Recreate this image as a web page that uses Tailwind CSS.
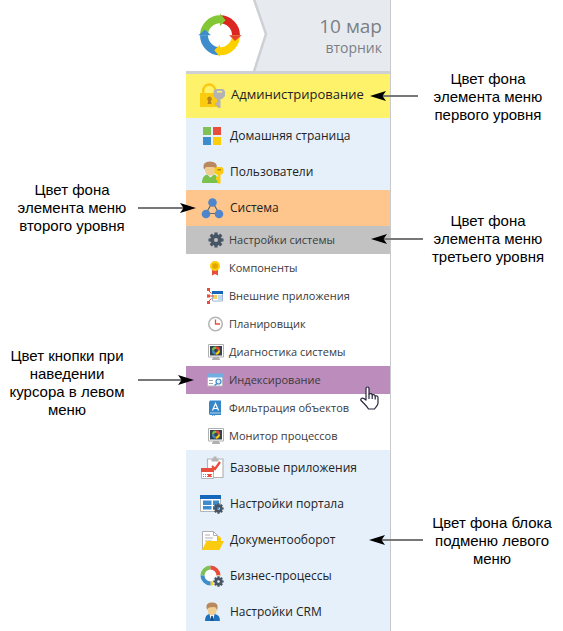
<!DOCTYPE html>
<html lang="ru">
<head>
<meta charset="utf-8">
<meta name="viewport" content="width=device-width, initial-scale=1">
<title>Цвета левого меню</title>
<script src="https://cdn.jsdelivr.net/npm/@tailwindcss/browser@4"></script>
</head>
<body class="bg-white font-['Liberation_Sans',Arial,sans-serif] text-black">
<!-- Shared drawings -->
<svg class="hidden" aria-hidden="true">
  <symbol id="gear" viewBox="0 0 16 16">
    <g stroke="#475564" stroke-width="3.200" fill="none">
      <path d="M8 .5V4M8 12v3.500M.5 8H4M12 8h3.500M2.700 2.700l2.500 2.500M10.800 10.800l2.500 2.500M13.300 2.700l-2.500 2.500M5.200 10.800l-2.500 2.500"/>
      <circle cx="8" cy="8" r="3.900" stroke-width="3.800"/>
    </g>
  </symbol>
  <symbol id="monitor" viewBox="0 0 16 16">
    <path fill="#fff" stroke="#b0b0b0" d="M.5.5h15v12.500H.5z"/>
    <path fill="#34434f" d="M2 2h12v9.500H2z"/>
    <path fill="#b0b0b0" d="M5 13h6v1.500h1V16H4v-1.500h1z"/>
    <g fill="none" stroke-width="2.200"><path stroke="#78bd4c" d="M5 6.600A3 3 0 0 1 8 3.600"/><path stroke="#e84c3d" d="M8 3.600a3 3 0 0 1 3 3"/><path stroke="#fbce07" d="M11 6.600a3 3 0 0 1-3 3"/><path stroke="#3e8ccb" d="M8 9.600a3 3 0 0 1-3-3"/></g>
  </symbol>
  <symbol id="arrow" viewBox="0 0 16 12">
    <path fill="#000" d="M0 6 16 1 12.500 6 16 11z"/>
  </symbol>
</svg>

<main class="grid grid-cols-[186px_205px_1fr]">
  <!-- Notes to the left of the menu -->
  <section class="relative z-10 pt-[181px] text-[15px] leading-[18px] text-center">
    <div class="relative">
      <p class="w-36">Цвет фона<br>элемента меню<br>второго уровня</p>
      <svg class="absolute left-[138px] top-[21px] h-3 w-[58px]" viewBox="0 0 58 12" aria-hidden="true"><path stroke="#777" stroke-width="2" d="M0 6h46"/><use href="#arrow" width="16" height="12" transform="matrix(-1 0 0 1 58 0)"/></svg>
    </div>
    <div class="relative pt-28">
      <p class="w-[134px]">Цвет кнопки при<br>наведении<br>курсора в левом<br>меню</p>
      <svg class="absolute left-[138px] top-[139px] h-3 w-[56px]" viewBox="0 0 56 12" aria-hidden="true"><path stroke="#777" stroke-width="2" d="M0 6h44"/><use href="#arrow" width="16" height="12" transform="matrix(-1 0 0 1 56 0)"/></svg>
    </div>
  </section>

  <!-- Menu -->
  <aside class="border-r border-[#c8cacd] bg-[#e5f0fb] pb-px font-['Open_Sans','Noto_Sans',sans-serif] text-[#222]">
    <header class="flex h-[74px] border-b-[3px] border-[#cdd0d5] bg-[#e7ebf0]">
      <svg class="h-[71px] w-[84px] shrink-0" viewBox="0 0 84 71" role="img" aria-label="Логотип">
        <path fill="#fff" d="M0 0h68l12.500 34L68 71H0z"/>
        <path fill="none" stroke="#cdd0d5" stroke-width="2.500" d="M67.500-2 80 34 67.500 73"/>
        <g transform="translate(12 13.300)">
          <g fill="none" stroke-width="8">
            <path stroke="#83c736" d="M6 22A16 16 0 0 1 22 6"/>
            <path stroke="#dc2420" d="M22 6A16 16 0 0 1 38 22"/>
            <path stroke="#fdd000" d="M38 22A16 16 0 0 1 22 38"/>
            <path stroke="#3e8ccb" d="M22 38A16 16 0 0 1 6 22"/>
          </g>
          <path fill="#83c736" d="M22 .3l5.700 6.700L22 12.800z"/>
          <path fill="#e5432f" d="M43.700 22l-6.700 5.700L31.200 22z"/>
          <path fill="#fdd000" d="M22 43.700l-5.700-6.700L22 31.200z"/>
          <path fill="#3e8ccb" d="M.3 22l6.700-5.700L12.800 22z"/>
        </g>
      </svg>
      <p class="grow pt-[14px] pr-2 text-right text-[19px] leading-6 text-[#7b7f84]">10 мар<span class="block text-[14px] leading-5">вторник</span></p>
    </header>
    <nav aria-label="Левое меню">
      <a href="#admin" class="flex h-11 items-center gap-1 bg-[#fff26b] pb-[2px] pl-[13px] text-[13px]">
        <svg class="h-7 w-7" viewBox="0 0 28 28" aria-hidden="true">
          <path fill="none" stroke="#fbc80e" stroke-width="2.400" d="M4.200 13V9.500a6 6 0 0 1 12 0V13"/>
          <path fill="#fbcb10" d="M1 12h18v14H1z"/><path fill="#b4831d" d="M10.500 15.500a2.500 2.500 0 0 0-1.300 4.500L8.500 23h4l-.7-3a2.500 2.500 0 0 0-1.300-4.500z"/>
          <path fill="#b3b3b3" d="M16 8h8l2 2v5l-3 3h-1.500v9H20l-2-1v-1.500h-2v-3h2V18h-1l-2.500-3v-5z"/><path fill="#fff26b" d="M18 10h5v1.500h-5z"/>
        </svg>Администрирование</a>
      <ul class="text-xs">
        <li><a href="#home" class="flex h-9 items-center gap-[6px] pl-[14px]">
          <svg class="size-6" viewBox="0 0 24 24" aria-hidden="true"><path fill="#7fc154" d="M3 3h8v8H3z"/><path fill="#e84c3d" d="M13 3h8v8h-8z"/><path fill="#3e8ccb" d="M3 13h8v8H3z"/><path fill="#fbce07" d="M13 13h8v8h-8z"/></svg>Домашняя страница</a></li>
        <li><a href="#users" class="flex h-9 items-center gap-[6px] pl-[14px]">
          <svg class="size-6" viewBox="0 0 24 24" aria-hidden="true">
            <path fill="#efce91" d="M5 5.500h11v5q-1 5-5.500 5T5 10.500z"/><path fill="#b9885e" d="M3.500 8Q2.500 1.500 10 1.500t7 6.500l-1 2q-.5-3-3-3H7q-2.500 0-2.500 3z"/>
            <path fill="#7bc14d" d="M7 14.500l3.500 3 3.500-3q4 .5 4 8.500H2q0-7.500 5-8.500z"/>
            <path fill="#fbcb10" d="M16 7h6l1.500 1.500v4L22 14.500h-1.500v9h-3V20h-1.500v-3h1.500v-2.500H16l-1.500-2v-4z"/><path fill="#b4831d" d="M17.500 9h3.500v1.500h-3.500z"/>
          </svg>Пользователи</a></li>
        <li>
          <a href="#system" class="flex h-9 items-center gap-[6px] bg-[#fec68d] pl-[14px]">
          <svg class="size-6" viewBox="0 0 24 24" aria-hidden="true"><path fill="none" stroke="#666" stroke-width="1.200" d="M12.500 6 6 17.500h13z"/><g fill="#4f86cb"><circle cx="12.500" cy="6.500" r="4.300"/><circle cx="6" cy="18" r="4.300"/><circle cx="19" cy="18" r="4.300"/></g></svg>Система</a>
          <ul class="bg-white text-[11px] text-[#3a3a3a]">
            <li><a href="#settings" class="flex h-7 items-center gap-1 bg-[#c2c2c2] pl-[21px]"><svg class="h-4 w-[18px]" aria-hidden="true"><use href="#gear" x="1" width="16" height="16"/></svg>Настройки системы</a></li>
            <li><a href="#components" class="flex h-7 items-center gap-1 pl-[21px]"><svg class="h-4 w-[18px]" viewBox="0 0 18 16" aria-hidden="true"><path fill="#e84c3d" d="M5 9h6v6.500l-3-1.500-3 1.500z"/><circle cx="8" cy="6" r="5" fill="#fbce07"/><circle cx="8" cy="6" r="2.800" fill="#e3a400"/></svg>Компоненты</a></li>
            <li><a href="#external" class="flex h-7 items-center gap-1 pl-[21px]"><svg class="h-4 w-[18px]" viewBox="0 0 18 16" aria-hidden="true"><path fill="#fff" stroke="#9fb6d0" d="M5.500 3.500h10V13h-10z"/><path fill="#1765b8" d="M5 3h11v3H5z"/><path fill="#bed9f3" d="M11 7h4v5h-4z"/><path fill="#fbce55" d="M6 7h4v4H6z"/><path fill="none" stroke="#e84c3d" d="M1.500 2.500l3 3M1 8h6M1.500 13.500l3-3"/><path fill="#e84c3d" d="M0 0h3v3H0zM0 6.500h3v3H0zM0 13h3v3H0z"/></svg>Внешние приложения</a></li>
            <li><a href="#scheduler" class="flex h-7 items-center gap-1 pl-[21px]"><svg class="h-4 w-[18px]" viewBox="0 0 18 16" aria-hidden="true"><circle cx="8.500" cy="8" r="6.800" fill="#fff" stroke="#b5b5b5" stroke-width="1.500"/><path fill="none" stroke="#e84c3d" stroke-width="1.300" d="M8.500 3.500V8H13"/></svg>Планировщик</a></li>
            <li><a href="#diagnostics" class="flex h-7 items-center gap-1 pl-[21px]"><svg class="h-4 w-[18px]" aria-hidden="true"><use href="#monitor" x="1" width="16" height="16"/></svg>Диагностика системы</a></li>
            <li class="relative"><a href="#indexing" class="flex h-7 items-center gap-1 bg-[#bc8cbd] pl-[21px]"><svg class="h-4 w-[18px]" viewBox="0 0 18 16" aria-hidden="true"><path fill="#fff" stroke="#b8b8b8" d="M.5 2.500h15V14H.5z"/><path fill="#70aee3" d="M0 1.500h16v4H0z"/><path stroke="#a5a5a5" d="M2 8.500h4M2 11.500h4"/><path stroke="#4685cd" stroke-width="1.500" d="M10 11.500l-2.500 2"/><circle cx="11.500" cy="9.500" r="2.500" fill="#dbeeff" stroke="#4685cd" stroke-width="1.200"/></svg>Индексирование</a>
              <!-- Pointer over the hovered row -->
              <svg class="pointer-events-none absolute top-5 right-[10px] h-6 w-5" viewBox="0 0 20 24" aria-hidden="true"><path fill="#fff" stroke="#29263a" stroke-width="1.200" stroke-linejoin="round" d="M6 14V2.500a1.500 1.500 0 0 1 3 0V8q2.500-1 3.200.8Q14.500 8 15.200 10q2.500-.7 2.800 1.500V17q0 2-2 4l-1.500 2H8.500Q7 20.500 4.500 18L1 14.500q-.8-1.500 1-2.300 1.500-.3 4 1.800z"/><path fill="none" stroke="#29263a" stroke-width="1.200" d="M9 8v5M12.200 8.800V13M15.200 10v3.500"/></svg>
            </li>
            <li><a href="#filter" class="flex h-7 items-center gap-1 pl-[21px]"><svg class="h-4 w-[18px]" viewBox="0 0 18 16" aria-hidden="true"><path fill="#3587ca" d="M3 .5h11V15H8v1l-1.500-1L5 16v-1H3l-1-1V2z"/><path stroke="#b8d6ef" d="M3 13h10.500"/><path fill="none" stroke="#fff" stroke-width="1.200" d="M5.500 10.500 8.500 3.500l3 7M6.500 8.500h4"/></svg>Фильтрация объектов</a></li>
            <li><a href="#monitoring" class="flex h-7 items-center gap-1 pl-[21px]"><svg class="h-4 w-[18px]" aria-hidden="true"><use href="#monitor" x="1" width="16" height="16"/></svg>Монитор процессов</a></li>
          </ul>
        </li>
        <li><a href="#apps" class="flex h-9 items-center gap-[6px] pl-[14px]"><svg class="size-6" viewBox="0 0 24 24" aria-hidden="true"><path fill="#fff" stroke="#b5b5b5" stroke-width="1.200" d="M7.500 3h15.500v18.500H7.500z"/><path fill="#b5b5b5" d="M11.500 2.500h2V.5h3v2h2v3h-7z"/><path fill="none" stroke="#e84c3d" stroke-width="2.200" d="M12 10l3 3 5-7"/><path fill="#fff" stroke="#b5b5b5" d="M1.500 12.500h12v10h-12z"/><path fill="#e84c3d" d="M1 12h13v4H1z"/><path stroke="#888" stroke-dasharray="1 1" stroke-width="1" d="M3 18.500h9M3 20.500h9"/><path fill="#e84c3d" d="M8 18h3v3H8z"/></svg>Базовые приложения</a></li>
        <li><a href="#portal" class="flex h-9 items-center gap-[6px] pl-[14px]"><svg class="size-6" viewBox="0 0 24 24" aria-hidden="true"><path fill="#fff" stroke="#b5b5b5" d="M.5 3.500h20v16H.5z"/><path fill="#1668bc" d="M0 3h21v4H0z"/><path fill="#3e8ccb" d="M3 8.500h8.500V13H3zM13 8.500h6V13h-6zM3 14h8.500v3.500H3zM13 14h6v3.500h-6z"/><use href="#gear" x="13" y="11" width="11" height="11"/></svg>Настройки портала</a></li>
        <li><a href="#documents" class="flex h-9 items-center gap-[6px] pl-[14px]"><svg class="size-6" viewBox="0 0 24 24" aria-hidden="true"><path fill="#fbcb10" d="M12 8h7l2 2v5h-9z"/><path fill="#fff" stroke="#b0b0b0" d="M2.500 3.500h11l4 4v14h-15z"/><path fill="none" stroke="#b0b0b0" d="M13.500 3.500v4h4M5 7h5M5 10h8M5 13h7"/><path fill="#fbcb10" d="M2 22 6.500 13h17.500l-4.500 9z"/></svg>Документооборот</a></li>
        <li><a href="#processes" class="flex h-9 items-center gap-[6px] pl-[14px]"><svg class="size-6" viewBox="0 0 24 24" aria-hidden="true"><circle cx="10.500" cy="11.500" r="6" fill="#fff"/><g fill="none" stroke-width="4"><path stroke="#7fc154" d="M2.500 11.500a8 8 0 0 1 8-8"/><path stroke="#e84c3d" d="M10.500 3.500a8 8 0 0 1 8 8"/><path stroke="#fbce07" d="M18.500 11.500a8 8 0 0 1-8 8"/><path stroke="#3e8ccb" d="M10.500 19.500a8 8 0 0 1-8-8"/></g><circle cx="18.500" cy="17.500" r="6" fill="#e5f0fb"/><use href="#gear" x="13" y="12" width="11" height="11"/></svg>Бизнес-процессы</a></li>
        <li><a href="#crm" class="flex h-9 items-center gap-[6px] pl-[14px]"><svg class="size-6" viewBox="0 0 24 24" aria-hidden="true"><path fill="#efce91" d="M8 5.500h8.500V12q-1 4-4.500 4t-4-4z"/><path fill="#b9885e" d="M6.500 8q-1-5.500 5.500-5.500T17.500 8L17 11q-.5-4-3-4-4 0-6 1l-.5 2z"/><path fill="#1f73bd" d="M9.500 14l2.500 3 2.500-3q5.500.5 5.500 7H5q0-6.500 4.500-7z"/><path fill="#fff" d="M9.500 14l2.500 2 2.500-2-1 4.500h-3z"/><path fill="#174f87" d="M11.200 16h1.600l.8 5h-3z"/></svg>Настройки CRM</a></li>
      </ul>
    </nav>
  </aside>

  <!-- Notes to the right of the menu -->
  <section class="relative pt-[70px] text-[15px] leading-[18px] text-center">
    <div class="relative">
      <p class="ml-4 w-[162px]">Цвет фона<br>элемента меню<br>первого уровня</p>
      <svg class="absolute top-5 -left-[21px] h-3 w-12" viewBox="0 0 48 12" aria-hidden="true"><path stroke="#777" stroke-width="2" d="M12 6h36"/><use href="#arrow" width="16" height="12"/></svg>
    </div>
    <div class="relative pt-[88px]">
      <p class="ml-4 w-[162px]">Цвет фона<br>элемента меню<br>третьего уровня</p>
      <svg class="absolute top-[109px] -left-5 h-3 w-[52px]" viewBox="0 0 52 12" aria-hidden="true"><path stroke="#777" stroke-width="2" d="M12 6h40"/><use href="#arrow" width="16" height="12"/></svg>
    </div>
    <div class="relative pt-[248px]">
      <p class="ml-5 w-[162px]">Цвет фона блока<br>подменю левого<br>меню</p>
      <svg class="absolute top-[268px] -left-[22px] h-3 w-[54px]" viewBox="0 0 54 12" aria-hidden="true"><path stroke="#777" stroke-width="2" d="M12 6h42"/><use href="#arrow" width="16" height="12"/></svg>
    </div>
  </section>
</main>
</body>
</html>
